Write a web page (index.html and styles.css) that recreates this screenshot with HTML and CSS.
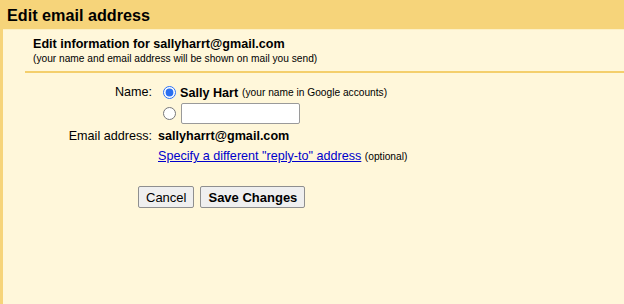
FILE: index.html
```html
<!DOCTYPE html>
<html lang="en">
<head>
  <meta charset="UTF-8">
  <title>Edit email address</title>
  <link rel="stylesheet" href="styles.css">
</head>
<body>
  <div class="page-title">Edit email address</div>
  <div class="panel">
    <div class="intro">
      <div class="intro-title">Edit information for sallyharrt@gmail.com</div>
      <div class="intro-note">(your name and email address will be shown on mail you send)</div>
    </div>

    <table class="edit-form">
      <tr>
        <td class="label">Name:</td>
        <td class="value">
          <label class="choice"><input type="radio" name="name" checked> <b>Sally Hart</b> <span class="small">(your name in Google accounts)</span></label>
          <label class="choice"><input type="radio" name="name"> <input type="text" class="name-input"></label>
        </td>
      </tr>
      <tr>
        <td class="label">Email address:</td>
        <td class="value">
          <b>sallyharrt@gmail.com</b>
          <div class="reply-to"><a href="#">Specify a different "reply-to" address</a> <span class="small">(optional)</span></div>
        </td>
      </tr>
    </table>

    <div class="actions">
      <button class="btn">Cancel</button>
      <button class="btn btn-save">Save Changes</button>
    </div>
  </div>
</body>
</html>
```

FILE: styles.css
```css
* {
  box-sizing: border-box;
}

html, body {
  height: 100%;
}

body {
  margin: 0;
  font-family: "Liberation Sans", Arial, sans-serif;
  font-size: 12.6px;
  color: #000;
  background: #f6d47a;
  display: flex;
  flex-direction: column;
}

.page-title {
  height: 29px;
  padding: 6px 0 0 7px;
  font-size: 16.2px;
  font-weight: bold;
  line-height: 19px;
  background: #f6d47a;
}

.panel {
  flex: 1;
  margin-left: 3px;
  background: #fff7da;
  border-top: 1px solid #fdf0c4;
}

.intro {
  margin-left: 22px;
  padding: 7px 0 6px 8px;
  border-bottom: 2px solid #f4cf6c;
}

.intro-title {
  font-weight: bold;
  line-height: 15px;
}

.intro-note {
  font-size: 10.2px;
  line-height: 13px;
}

.edit-form {
  border-collapse: collapse;
  margin-top: 10px;
}

.edit-form td {
  padding: 0;
  vertical-align: top;
}

.label {
  width: 155px;
  padding-right: 6px !important;
  text-align: right;
  line-height: 18px;
}

.edit-form tr + tr .label,
.edit-form tr + tr .value {
  padding-top: 3px;
}

.value {
  line-height: 18px;
}

.choice {
  display: flex;
  align-items: center;
  gap: 4px;
  min-height: 19px;
}

.choice + .choice {
  min-height: 21px;
}

.choice input[type="radio"] {
  width: 13px;
  height: 13px;
  margin: 0 0 0 5px;
  accent-color: #2b6ff0;
}

.name-input {
  width: 119px;
  height: 21px;
  margin: 1px 0 0 1px;
  border: 1px solid #9a9a9a;
  border-radius: 2px;
  background: #fff;
}

.small {
  font-size: 10.2px;
}

.reply-to {
  margin-top: 2px;
}

.reply-to a {
  color: #0000cc;
}

.actions {
  margin: 20px 0 0 135px;
  display: flex;
  gap: 6px;
}

.btn {
  font-family: "Liberation Sans", Arial, sans-serif;
  font-size: 13px;
  height: 22px;
  padding: 0 7px;
  background: #efefef;
  border: 1px solid #8f8f8f;
  border-radius: 2px;
  color: #000;
}

.btn-save {
  font-weight: bold;
}
```
